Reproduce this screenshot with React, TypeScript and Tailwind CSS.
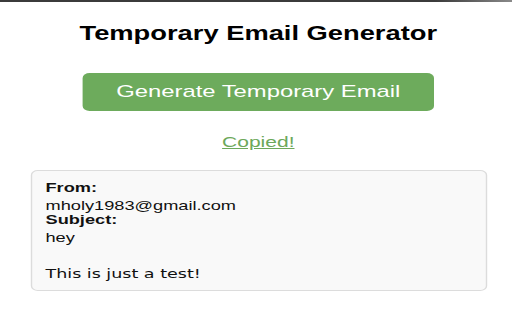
export default function App() {
    const email = {
        from: 'mholy1983@gmail.com',
        subject: 'hey',
        body: 'This is just a test!',
    };

    return (
        <div className="h-[320px] w-[512px] overflow-hidden bg-white">
            <div className="h-[2px] bg-gradient-to-r from-[#3b3b3b] via-[#3b3b3b] via-[85%] to-[#8a8a8a]" />
            {/* popup content, stretched horizontally like the screenshot */}
            <div className="w-[369px] origin-top-left scale-x-[1.4] font-['Liberation_Sans',Arial,sans-serif] text-[#111]">
                <h1 className="mt-[19.5px] text-center text-[19.5px] leading-[22px] font-bold text-black">
                    Temporary Email Generator
                </h1>
                <button
                    type="button"
                    className="mx-auto mt-[29.5px] flex h-[37.5px] w-[251px] items-center justify-center rounded-[5px] bg-[#6dab5c] text-[17px] leading-[21px] text-white"
                >
                    Generate Temporary Email
                </button>
                <div className="mt-[22.5px] text-center text-[15px] leading-[18px]">
                    <a href="#" className="text-[#6ca85a] underline">
                        Copied!
                    </a>
                </div>
                <div className="mx-auto mt-[19px] w-[326px] rounded-[5px] border border-[#dcdcdc] bg-[#f9f9f9] px-[10px] pt-[9px] pb-[8px] text-[13px]">
                    <div className="leading-[15px] font-bold">From:</div>
                    <div className="mt-[4px] leading-[14px]">{email.from}</div>
                    <div className="leading-[14px] font-bold">Subject:</div>
                    <div className="mt-[3px] leading-[15px]">{email.subject}</div>
                    <div className="mt-[20px] font-['DejaVu_Sans',sans-serif] text-[12.5px] leading-[17px]">
                        {email.body}
                    </div>
                </div>
            </div>
        </div>
    );
}
